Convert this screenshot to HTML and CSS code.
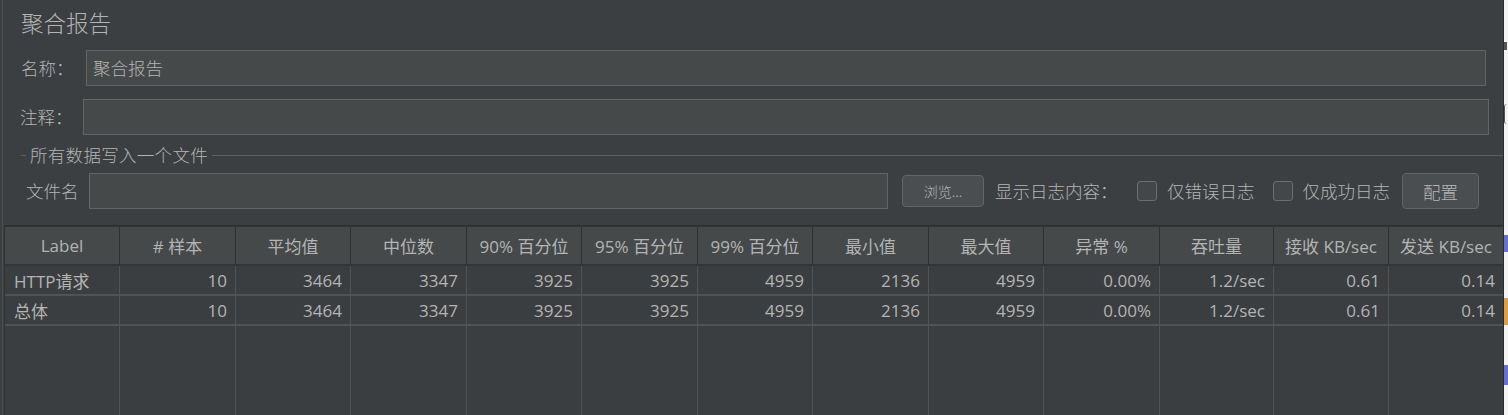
FILE: index.html
```html
<!DOCTYPE html>
<html lang="zh">
<head>
<meta charset="utf-8">
<title>聚合报告</title>
<link rel="stylesheet" href="styles.css">
</head>
<body>
<div class="page">
  <div class="main">
    <div class="title">聚合报告</div>

    <div class="row row-name">
      <span class="label lbl-name">名称：</span>
      <div class="input">聚合报告</div>
    </div>

    <div class="row row-comment">
      <span class="label lbl-comment">注释：</span>
      <div class="input"></div>
    </div>

    <div class="legend">
      <span class="legend-stub"></span>
      <span class="legend-text">所有数据写入一个文件</span>
      <span class="legend-line"></span>
    </div>

    <div class="row row-file">
      <span class="label lbl-file">文件名</span>
      <div class="input file-input"></div>
      <button class="btn btn-browse">浏览...</button>
      <span class="label show-log">显示日志内容：</span>
      <span class="checkbox cb-error"></span>
      <span class="label cb-text">仅错误日志</span>
      <span class="checkbox cb-success"></span>
      <span class="label cb-text">仅成功日志</span>
      <button class="btn btn-config">配置</button>
    </div>

    <table class="report">
      <colgroup>
        <col class="c115"><col class="c116"><col class="c115"><col class="c116"><col class="c115"><col class="c116"><col class="c115"><col class="c116"><col class="c115"><col class="c116"><col class="c114"><col class="c115"><col class="c115">
      </colgroup>
      <thead>
        <tr>
          <th>Label</th><th># 样本</th><th>平均值</th><th>中位数</th><th>90% 百分位</th><th>95% 百分位</th><th>99% 百分位</th><th>最小值</th><th>最大值</th><th>异常 %</th><th>吞吐量</th><th>接收 KB/sec</th><th>发送 KB/sec</th>
        </tr>
      </thead>
      <tbody>
        <tr>
          <td class="lbl">HTTP请求</td><td>10</td><td>3464</td><td>3347</td><td>3925</td><td>3925</td><td>4959</td><td>2136</td><td>4959</td><td>0.00%</td><td>1.2/sec</td><td>0.61</td><td>0.14</td>
        </tr>
        <tr>
          <td class="lbl">总体</td><td>10</td><td>3464</td><td>3347</td><td>3925</td><td>3925</td><td>4959</td><td>2136</td><td>4959</td><td>0.00%</td><td>1.2/sec</td><td>0.61</td><td>0.14</td>
        </tr>
        <tr class="filler">
          <td></td><td></td><td></td><td></td><td></td><td></td><td></td><td></td><td></td><td></td><td></td><td></td><td></td>
        </tr>
      </tbody>
    </table>
  </div>
  <div class="edge">
    <span class="bit bit-dark"></span>
    <span class="bit bit-ring"></span>
    <span class="bit bit-blue1"></span>
    <span class="bit bit-orange"></span>
    <span class="bit bit-blue2"></span>
  </div>
</div>
</body>
</html>
```

FILE: styles.css
```css
html, body {
  margin: 0;
  padding: 0;
  background: #3c3f41;
  width: 1508px;
  height: 415px;
  overflow: hidden;
}

body {
  font-family: "Noto Sans CJK SC", "Open Sans", sans-serif;
  color: #b4b4b4;
}

.page {
  display: flex;
  width: 1508px;
  height: 415px;
}

.main {
  flex: 1;
  margin-left: 2px;
  border-left: 1px solid #4d5052;
  height: 415px;
  overflow: hidden;
}

.title {
  height: 44px;
  line-height: 44px;
  font-size: 22.5px;
  font-weight: 300;
  padding-left: 18px;
  color: #b4b4b4;
}

.row {
  display: flex;
  align-items: center;
  height: 36px;
}

.label {
  font-size: 17.5px;
  font-weight: 300;
  line-height: 24px;
  white-space: nowrap;
  color: #b4b4b4;
}

.input {
  box-sizing: border-box;
  height: 36px;
  background: #45494a;
  border: 1px solid #646464;
  font-size: 17.5px;
  font-weight: 300;
  line-height: 34px;
  padding-left: 6px;
  color: #b4b4b4;
}

.row-name {
  margin-top: 6px;
  padding-left: 18px;
}
.lbl-name { width: 65px; }
.row-name .input { flex: 1; margin-right: 17px; }

.row-comment {
  margin-top: 13px;
  padding-left: 17px;
}
.lbl-comment { width: 63px; }
.row-comment .input { flex: 1; margin-right: 14px; }

.legend {
  display: flex;
  align-items: center;
  margin-top: 8px;
  height: 24px;
  padding-left: 18px;
}
.legend-stub {
  width: 5px;
  height: 1px;
  background: #5c5f61;
}
.legend-text {
  font-size: 17.5px;
  font-weight: 300;
  line-height: 24px;
  padding: 0 4px 0 4px;
  letter-spacing: 0.3px;
}
.legend-line {
  flex: 1;
  height: 1px;
  background: #5c5f61;
}

.row-file {
  margin-top: 6px;
  padding-left: 23px;
}
.lbl-file { width: 63px; }
.file-input { width: 799px; flex: none; }

.btn {
  box-sizing: border-box;
  background: #4a4e50;
  border: 1px solid #626465;
  border-radius: 4px;
  color: #b4b4b4;
  font-family: "Noto Sans CJK SC", "Open Sans", sans-serif;
  font-weight: 300;
  padding: 0;
  cursor: default;
}
.btn-browse {
  margin-left: 14px;
  width: 82px;
  height: 32px;
  font-size: 14px;
}
.show-log { margin-left: 11px; width: 142px; }
.checkbox {
  box-sizing: border-box;
  width: 20px;
  height: 20px;
  border: 1px solid #6b6e70;
  border-radius: 3px;
  background: #43474a;
  flex: none;
}
.cb-error { margin-left: 0; }
.cb-text { margin-left: 10px; }
.cb-success { margin-left: 18px; }
.btn-config {
  margin-left: 12px;
  width: 77px;
  height: 36px;
  font-size: 17.5px;
}

/* table */
.report {
  margin-top: 16px;
  margin-left: 1px;
  width: 1500px;
  table-layout: fixed;
  border-collapse: separate;
  border-spacing: 0;
  border-top: 2px solid #2f3133;
  border-left: 1px solid #2f3133;
  font-family: "Open Sans", "Noto Sans CJK SC", sans-serif;
  font-size: 17px;
  color: #b4b4b4;
}
.c114 { width: 114px; }
.c115 { width: 115px; }
.c116 { width: 116px; }

.report th {
  height: 37px;
  padding: 0;
  background: #45494a;
  font-weight: normal;
  text-align: center;
  border-right: 1px solid #2f3133;
  border-bottom: 2px solid #333537;
  white-space: nowrap;
  overflow: hidden;
}

.report td {
  height: 28px;
  padding: 0 8px 0 0;
  text-align: right;
  white-space: nowrap;
  border-right: 1px solid #505356;
  border-bottom: 2px solid #505356;
  background: #3b3e40;
}
.report td.lbl {
  text-align: left;
  padding: 0 0 0 9px;
}
.report tr.filler td {
  height: 100px;
  border-bottom: none;
}

/* right edge strip */
.edge {
  position: relative;
  width: 4px;
  height: 415px;
  background: #f4f4f4;
  border-left: 1px solid #2b2b2b;
  flex: none;
}
.bit {
  position: absolute;
  left: 0;
}
.bit-dark {
  top: 42px;
  width: 3px;
  height: 8px;
  background: #555555;
}
.bit-ring {
  top: 104px;
  width: 3px;
  height: 20px;
  border-left: 1px solid #555555;
  border-radius: 10px 0 0 10px;
  box-sizing: border-box;
}
.bit-blue1 {
  top: 235px;
  width: 4px;
  height: 17px;
  background: #6a6fd8;
}
.bit-orange {
  top: 298px;
  width: 4px;
  height: 27px;
  background: #e0a040;
}
.bit-blue2 {
  top: 365px;
  width: 4px;
  height: 20px;
  background: #6a6fd8;
}
```
